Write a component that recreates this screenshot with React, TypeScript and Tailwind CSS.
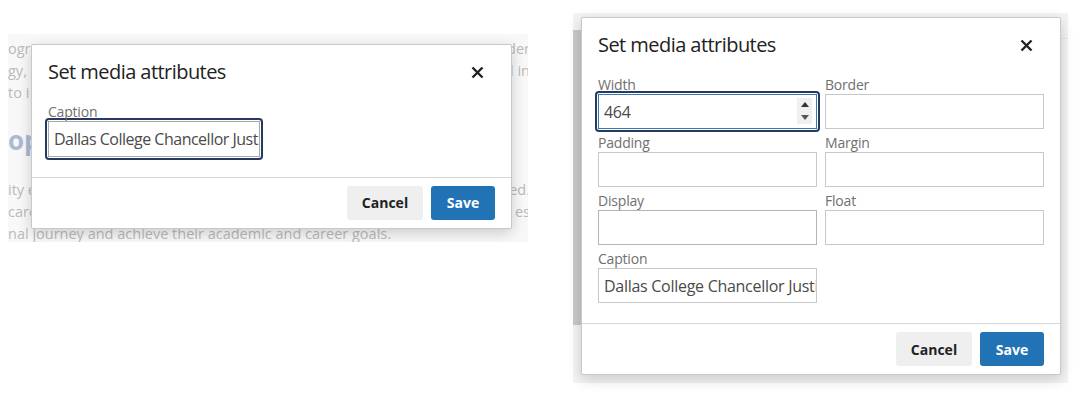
import React from 'react';

const font = "font-['Open_Sans',sans-serif]";

const CloseIcon = () => (
  <svg width="13" height="13" viewBox="0 0 13 13" className="shrink-0">
    <path d="M1.5 1.5 L11.5 11.5 M11.5 1.5 L1.5 11.5" stroke="#222" strokeWidth="2.4" strokeLinecap="butt" />
  </svg>
);

const Header = () => (
  <div className="flex items-center justify-between pl-4 pr-[27px] pt-[13px]">
    <h2 className="text-[20px] leading-[28px] tracking-[-0.55px] text-[#222]">Set media attributes</h2>
    <CloseIcon />
  </div>
);

const Footer = () => (
  <div className="flex justify-end gap-2 border-t border-[#d6d6d6] px-4 py-2">
    <button className="h-[34px] w-[76px] rounded-[3px] bg-[#efefef] text-[14px] font-bold text-[#222]">Cancel</button>
    <button className="h-[34px] w-[64px] rounded-[3px] bg-[#2173b6] text-[14px] font-bold text-white">Save</button>
  </div>
);

const Label = ({ children }: { children: React.ReactNode }) => (
  <div className="text-[14px] leading-[19px] tracking-[-0.2px] text-[#707070]">{children}</div>
);

const Input = ({ value, className = '', tight = false }: { value?: string; className?: string; tight?: boolean }) => (
  <div
    className={`flex h-[35px] items-center overflow-hidden whitespace-nowrap border bg-white pl-[5px] text-[16px] text-[#4a4a4a] ${
      tight ? 'tracking-[-0.5px]' : 'tracking-[-0.28px]'
    } ${className}`}
  >
    {value}
  </div>
);

const Focus = ({ children }: { children: React.ReactNode }) => (
  <div className="-m-[3px] rounded-[4px] border-2 border-[#243a5e] p-[1px]">{children}</div>
);

const Spinner = () => (
  <div className="absolute right-[5px] top-[4px] flex h-[26px] w-[15px] flex-col items-center justify-between bg-[#f0f0f0] py-[4px]">
    <svg width="8" height="5" viewBox="0 0 8 5"><path d="M0 5 L4 0 L8 5 Z" fill="#333" /></svg>
    <svg width="8" height="5" viewBox="0 0 8 5"><path d="M0 0 L4 5 L8 0 Z" fill="#555" /></svg>
  </div>
);

const bgLines: [string, string][] = [
  ['s a', 'and'],
  ['ogra', 'der'],
  ['gy, a', 'd in'],
  ['to i', ''],
];

const bgLines2: [string, string][] = [
  ['ity e', 'ed.'],
  ['care', 'es'],
];

export default function App() {
  return (
    <div className={`flex h-[399px] w-[1083px] items-start overflow-hidden bg-white ${font}`}>
      <div className="relative ml-[8px] mt-[34px] h-[208px] w-[520px] shrink-0 overflow-hidden bg-[#f8f8f9] text-[14.5px] leading-[22px] text-[#bababa]">
        <div className="-mt-[18px]">
          {bgLines.map(([l, r], i) => (
            <div key={i} className="flex justify-between whitespace-nowrap">
              <span>{l}</span>
              <span className="-mr-[2px]">{r}</span>
            </div>
          ))}
          <div className="mt-[20px] text-[26px] font-bold leading-[32px] text-[#aabad4]">ope</div>
          <div className="mt-[23px]">
            {bgLines2.map(([l, r], i) => (
              <div key={i} className="flex justify-between whitespace-nowrap">
                <span>{l}</span>
                <span className="-mr-[2px]">{r}</span>
              </div>
            ))}
          </div>
          <div className="whitespace-nowrap">nal journey and achieve their academic and career goals.</div>
        </div>

        <div className="absolute left-[23px] top-[10px] w-[481px] rounded-[2px] border border-[#c8c8c8] bg-white shadow-[0_4px_14px_rgba(0,0,0,0.18)]">
          <Header />
          <div className="px-4 pb-[20px] pt-[16px]">
            <Label>Caption</Label>
            <div className="w-[212px]">
              <Focus>
                <Input tight value="Dallas College Chancellor Justin Lonon" className="h-[36px] border-[#a8a8a8]" />
              </Focus>
            </div>
          </div>
          <Footer />
        </div>
      </div>

      <div className="relative ml-[45px] mt-[13px] h-[370px] w-[495px] shrink-0 bg-[#f4f4f6]">
        <div className="mt-[17px] h-[295px] w-[8px] bg-[#c9c9cd]" />
        <div className="ml-auto -mt-[287px] h-[1px] w-[8px] bg-[#dfe6ee]" />

        <div className="absolute left-[8px] top-[4px] w-[480px] rounded-[2px] border border-[#c8c8c8] bg-white shadow-[0_4px_14px_rgba(0,0,0,0.18)]">
          <Header />
          <div className="grid grid-cols-2 gap-x-2 gap-y-[4px] px-4 pb-[20px] pt-[16px]">
            <div>
              <Label>Width</Label>
              <Focus>
                <div className="relative">
                  <Input value="464" className="border-[#3d78ab]" />
                  <Spinner />
                </div>
              </Focus>
            </div>
            <div>
              <Label>Border</Label>
              <Input className="border-[#c8c8c8]" />
            </div>
            <div>
              <Label>Padding</Label>
              <Input className="border-[#c8c8c8]" />
            </div>
            <div>
              <Label>Margin</Label>
              <Input className="border-[#c8c8c8]" />
            </div>
            <div>
              <Label>Display</Label>
              <Input className="border-[#b4b4b4]" />
            </div>
            <div>
              <Label>Float</Label>
              <Input className="border-[#c8c8c8]" />
            </div>
            <div>
              <Label>Caption</Label>
              <Input value="Dallas College Chancellor Justin Lonon" className="border-[#c8c8c8]" />
            </div>
          </div>
          <Footer />
        </div>
      </div>
    </div>
  );
}
